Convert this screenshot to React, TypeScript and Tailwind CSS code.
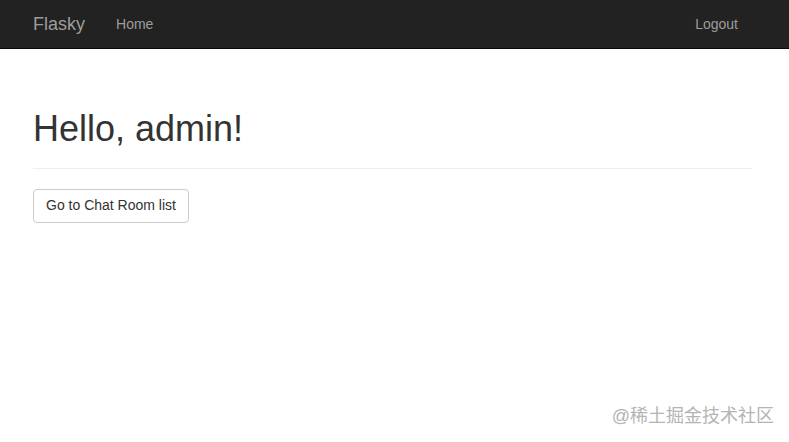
export default function App() {
  return (
    <div className="min-h-[442px] bg-white font-['Liberation_Sans',Arial,sans-serif] text-[#333] relative">
      <nav className="h-[49px] bg-[#222] border-b border-[#080808]">
        <div className="flex items-center h-full pl-[33px] pr-[51px]">
          <a className="text-[18px] text-[#9d9d9d]">Flasky</a>
          <a className="ml-[31px] text-[14px] text-[#9d9d9d]">Home</a>
          <a className="ml-auto text-[14px] text-[#9d9d9d]">Logout</a>
        </div>
      </nav>

      <div className="pl-[33px] pr-[37px] pt-[20px]">
        <div className="mt-[40px] pb-[9px] border-b border-[#eee]">
          <h1 className="text-[36px] leading-[1.1] mt-[20px] mb-[10px]">Hello, admin!</h1>
        </div>
        <button
          type="button"
          className="mt-[20px] h-[34px] px-[12px] text-[14px] text-[#333] bg-white border border-[#ccc] rounded-[4px]"
        >
          Go to Chat Room list
        </button>
      </div>

      <div className="absolute right-[15px] top-[403px] text-[18px] text-[#b4b4b4] font-['Liberation_Sans','Noto_Sans_CJK_SC',sans-serif]">
        @稀土掘金技术社区
      </div>
    </div>
  )
}
